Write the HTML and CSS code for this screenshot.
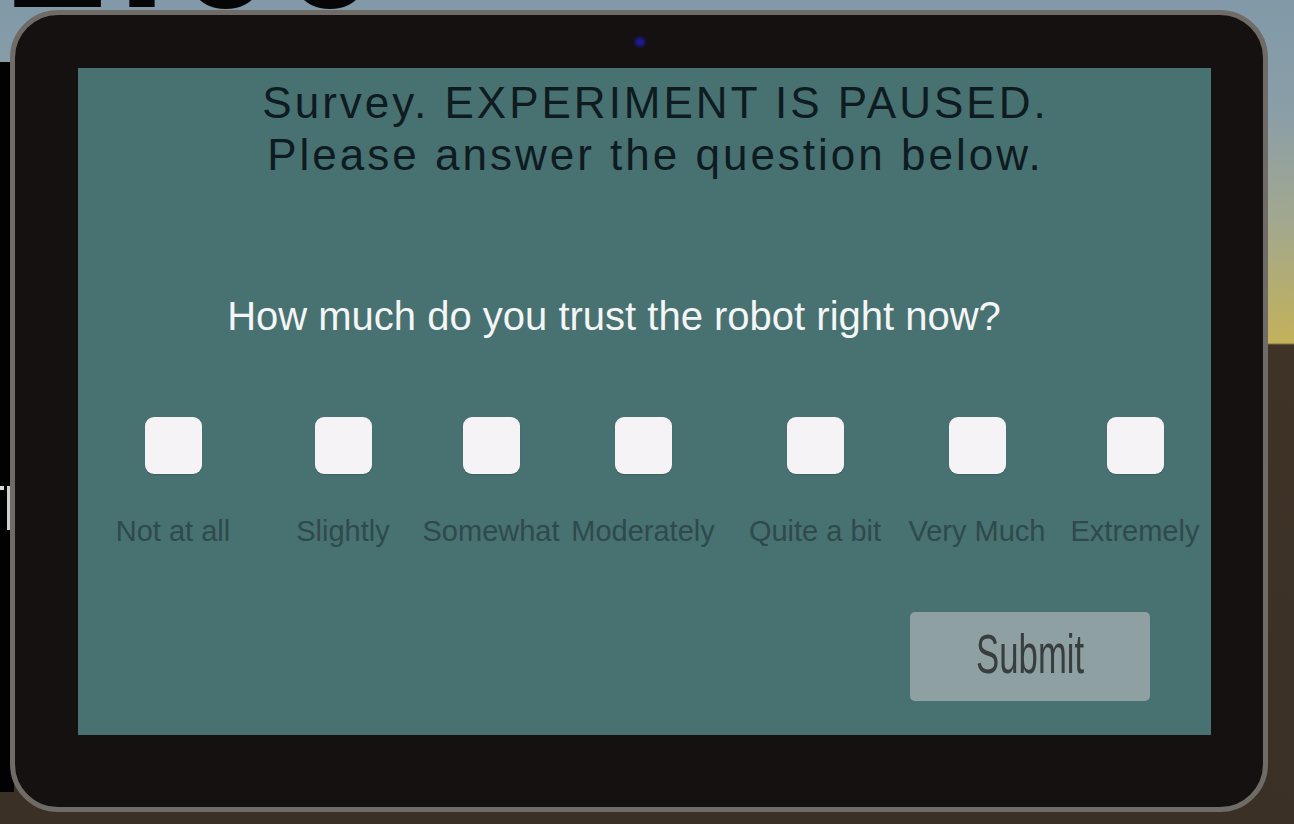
FILE: index.html
```html
<!DOCTYPE html>
<html lang="en">
<head>
<meta charset="utf-8">
<title>Survey</title>
<link rel="stylesheet" href="styles.css">
</head>
<body>
<div class="scene">
  <div class="clock">2:00</div>
  <div class="post">
    <span class="post-stub"></span>
    <span class="post-bar"></span>
  </div>

  <div class="tablet">
    <span class="camera"></span>
    <main class="screen">
      <h1 class="title">Survey. EXPERIMENT IS PAUSED.<br>Please answer the question below.</h1>
      <p class="question">How much do you trust the robot right now?</p>

      <div class="scale">
        <label class="option"><span class="box"></span><span class="caption">Not at all</span></label>
        <label class="option"><span class="box"></span><span class="caption">Slightly</span></label>
        <label class="option"><span class="box"></span><span class="caption">Somewhat</span></label>
        <label class="option"><span class="box"></span><span class="caption">Moderately</span></label>
        <label class="option"><span class="box"></span><span class="caption">Quite a bit</span></label>
        <label class="option"><span class="box"></span><span class="caption">Very Much</span></label>
        <label class="option"><span class="box"></span><span class="caption">Extremely</span></label>
      </div>

      <div class="actions">
        <button class="submit" type="button"><span class="submit-label">Submit</span></button>
      </div>
    </main>
  </div>
</div>
</body>
</html>
```

FILE: styles.css
```css
html,
body {
  margin: 0;
  width: 1294px;
  height: 824px;
  overflow: hidden;
}

body {
  font-family: "Liberation Sans", Arial, sans-serif;
  background: linear-gradient(
    to bottom,
    #8199a8 0px,
    #8a9ea8 110px,
    #a2a88f 220px,
    #bdb063 320px,
    #c2b25b 343px,
    #3f3328 345px,
    #3b3025 100%
  );
}

/* world behind the tablet */
.scene {
  position: relative;
  width: 1294px;
  height: 824px;
  box-sizing: border-box;
  padding: 10px 0 0 10px;
}

.clock {
  position: absolute;
  left: 8px;
  top: -145px;
  font-family: "Liberation Sans", Arial, sans-serif;
  font-weight: 700;
  font-size: 180px;
  line-height: 180px;
  letter-spacing: 4px;
  color: #060606;
}

.post {
  position: absolute;
  left: 0;
  top: 62px;
  width: 14px;
  height: 730px;
  background: #020202;
}

.post-stub {
  position: absolute;
  left: 0;
  top: 424px;
  width: 4px;
  height: 4px;
  background: #d8d8d8;
}

.post-bar {
  position: absolute;
  left: 7px;
  top: 424px;
  width: 3px;
  height: 44px;
  background: #cfcfcf;
}

/* device frame */
.tablet {
  position: relative;
  width: 1258px;
  height: 802px;
  box-sizing: border-box;
  border: 5px solid #6f6c67;
  border-radius: 48px;
  background: #141110;
  padding: 53px 52px 72px 63px;
}

.camera {
  position: absolute;
  left: 620px;
  top: 22px;
  width: 10px;
  height: 10px;
  border-radius: 50%;
  background: #1d1890;
  filter: blur(1.5px);
}

.screen {
  display: flex;
  flex-direction: column;
  width: 1133px;
  height: 667px;
  background: #487171;
}

.title {
  margin: 0;
  padding: 9px 0 0 22px;
  font-size: 44px;
  line-height: 52px;
  font-weight: 400;
  letter-spacing: 3px;
  text-align: center;
  color: #0e1b20;
}

.question {
  margin: 112px 0 0;
  padding-right: 61px;
  font-size: 40px;
  line-height: 46px;
  text-align: center;
  color: #f4f6f6;
}

.scale {
  display: grid;
  grid-template-columns: 170px 170px 126px 178px 166px 158px 158px;
  margin-top: 78px;
  padding-left: 10px;
}

.option {
  display: flex;
  flex-direction: column;
  align-items: center;
}

.box {
  width: 57px;
  height: 57px;
  border-radius: 9px;
  background: #f5f3f5;
  box-shadow: 0 1px 1px rgba(0, 0, 0, 0.15);
}

.caption {
  margin-top: 40px;
  font-size: 29px;
  line-height: 34px;
  white-space: nowrap;
  color: #2f4a4c;
}

.actions {
  display: flex;
  justify-content: flex-end;
  margin-top: 64px;
  padding-right: 61px;
}

.submit {
  width: 240px;
  height: 89px;
  border: none;
  border-radius: 5px;
  background: #8fa0a3;
  padding: 0 0 6px;
  display: flex;
  align-items: center;
  justify-content: center;
  font-family: "Liberation Sans", Arial, sans-serif;
  color: #383d3e;
}

.submit-label {
  display: inline-block;
  font-size: 56px;
  line-height: 60px;
  transform: scaleX(0.62);
}
```
